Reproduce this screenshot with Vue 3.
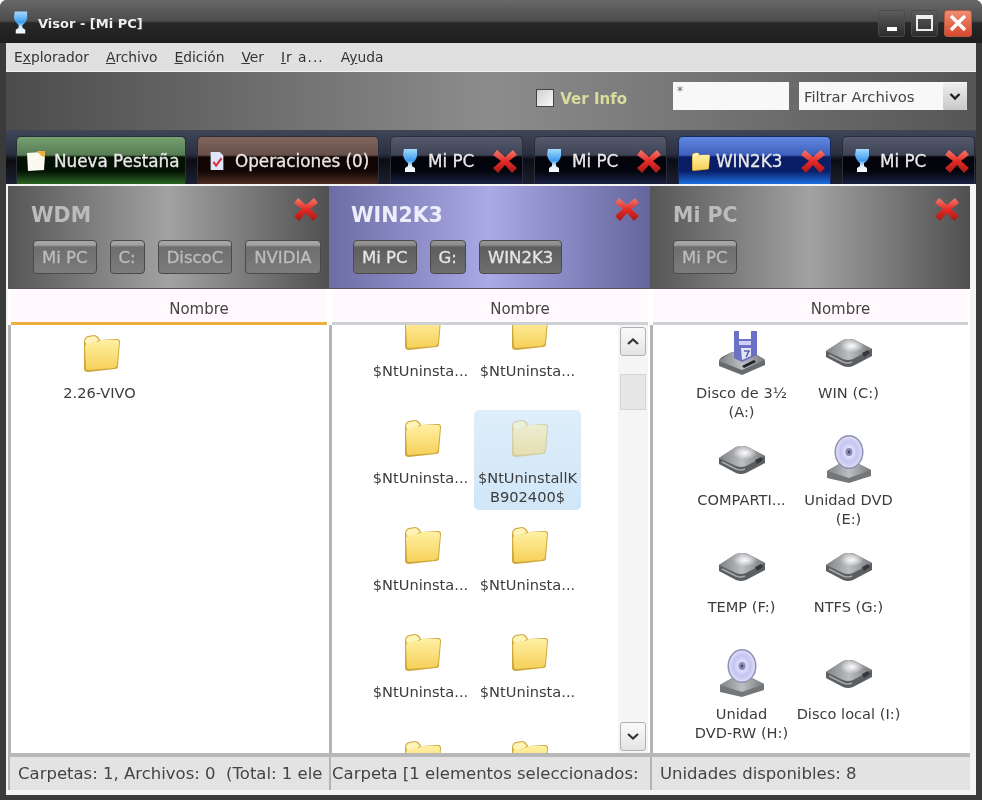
<template>
  <div class="window">
    <svg class="defs" width="0" height="0" aria-hidden="true">
      <defs>
        <linearGradient id="folderFace" x1="0" y1="0" x2="0" y2="1">
          <stop offset="0" stop-color="#fff0a2" />
          <stop offset="1" stop-color="#f6d05a" />
        </linearGradient>
        <linearGradient id="hddTop" x1="0" y1="0" x2="1" y2="0">
          <stop offset="0" stop-color="#7e8185" />
          <stop offset=".5" stop-color="#bcbec1" />
          <stop offset="1" stop-color="#76797d" />
        </linearGradient>
        <radialGradient id="hddGlow" cx=".5" cy=".5" r=".5">
          <stop offset="0" stop-color="#fcfcfc" />
          <stop offset="1" stop-color="#fcfcfc" stop-opacity="0" />
        </radialGradient>
        <radialGradient id="disc" cx=".5" cy=".5" r=".55">
          <stop offset="0" stop-color="#f4f4ff" />
          <stop offset=".6" stop-color="#c4c4f2" />
          <stop offset="1" stop-color="#e4e4fa" />
        </radialGradient>
        <linearGradient id="redX" x1="0" y1="0" x2="0" y2="1">
          <stop offset="0" stop-color="#f47a70" />
          <stop offset=".5" stop-color="#e42a24" />
          <stop offset="1" stop-color="#a81818" />
        </linearGradient>
        <linearGradient id="visor" x1="0" y1="0" x2="0" y2="1">
          <stop offset="0" stop-color="#a4dafc" />
          <stop offset=".5" stop-color="#3e9cf0" />
          <stop offset=".72" stop-color="#d8eefc" />
          <stop offset="1" stop-color="#fafcff" />
        </linearGradient>
      </defs>
      <symbol id="folder" viewBox="0 0 48 48">
        <path d="M8 14 Q8 9 12 8 L18 7 Q21 7 23 10 L24 12 L41 11 Q44 11 44 14 L42 38 Q42 41 39 41 L12 44 Q8 44 8 41Z" fill="#cfa83c" />
        <path d="M9 19 Q9 16 12 15 L20 14 Q22 14 25 12 L41 12 Q43 12 43 15 L41 37 Q41 39 38 40 L12 42 Q10 42 10 40Z" fill="url(#folderFace)" />
        <path d="M9 13 Q10 9 13 9 L18 8 Q20 8 22 11 L23 12 L20 14 L10 16Z" fill="#fff4b8" />
      </symbol>
      <symbol id="hdd" viewBox="0 0 48 48">
        <path d="M1 23 L18 12 Q24 10 30 12 L47 21 L47 28 L28 38 Q23 40 18 38 L1 29Z" fill="#5c5f62" />
        <path d="M1 23 L18 12 Q24 10 30 12 L47 21 L28 31 Q23 33 18 31Z" fill="url(#hddTop)" />
        <path d="M4 27 L18 34 Q23 36 27 34" fill="none" stroke="#a6a8ab" stroke-width="1.4" />
        <ellipse cx="27" cy="18" rx="12" ry="6.5" fill="url(#hddGlow)" />
        <path d="M37 25 L43 22 L45 25 L39 29Z" fill="#34373d" />
      </symbol>
      <symbol id="floppy" viewBox="0 0 48 48">
        <path d="M1 33 Q1 31 4 29 L14 24 L34 24 L46 31 Q47 32 47 34 L47 37 L24 47 L1 38Z" fill="#686b6e" />
        <path d="M1 33 L14 24 L34 24 L47 32 L24 42Z" fill="url(#hddTop)" />
        <path d="M16 3 L21 3 L21 11 L33 11 L33 3 L39 3 L39 27 L24 34 L16 30Z" fill="#6a70c4" />
        <path d="M21 13 L33 13 L33 17 L21 17Z" fill="#cdd0f0" />
        <path d="M23 20 L33 20 L33 28 L24 32Z" fill="#e4e6f8" />
        <path d="M26 23 L31 23 L28 29" fill="none" stroke="#5a60b4" stroke-width="1.6" />
        <path d="M24 38 L36 32 L38 34 L26 40Z" fill="#1e2026" />
      </symbol>
      <symbol id="dvd" viewBox="0 0 48 48">
        <path d="M2 36 L14 29 L34 29 L46 35 L46 41 L24 48 L2 43Z" fill="#74777a" />
        <path d="M2 36 L14 29 L34 29 L46 35 L24 43Z" fill="url(#hddTop)" />
        <ellipse cx="24" cy="17" rx="14.5" ry="17" fill="#8f90b4" />
        <ellipse cx="24" cy="17" rx="13" ry="15.5" fill="url(#disc)" />
        <ellipse cx="24" cy="17" rx="3.5" ry="4" fill="#8b8bb8" />
        <ellipse cx="24" cy="17" rx="1.3" ry="1.6" fill="#44446a" />
      </symbol>
      <symbol id="close" viewBox="0 0 24 24">
        <path d="M4 1 L12 8 L20 1 L24 6 L16 12 L24 19 L19 24 L12 16 L5 24 L0 19 L8 12 L0 6Z" fill="url(#redX)" />
      </symbol>
      <symbol id="visorIcon" viewBox="0 0 20 24">
        <path d="M4 0 L17 0 L17 7 Q16 12 12 14 L12 17 L15 19 L15 23 L5 23 L5 19 L8 17 L8 14 Q4 11 3 6Z" fill="url(#visor)" />
      </symbol>
      <symbol id="note" viewBox="0 0 20 20">
        <path d="M1 2 L15 1 L19 4 L18 19 L2 20Z" fill="#fbfaee" />
        <path d="M11 0 L19 0 L19 6 Q15 6 14 3 Q12 3 11 0Z" fill="#eeb040" />
      </symbol>
      <symbol id="ops" viewBox="0 0 20 22">
        <path d="M3 1 L13 1 L17 5 L17 21 L3 21Z" fill="#dce6f8" />
        <path d="M6 12 L9 16 L15 8" fill="none" stroke="#d8343c" stroke-width="2.4" />
      </symbol>
    </svg>

    <header class="titlebar">
      <svg class="title-icon"><use href="#visorIcon" /></svg>
      <span class="title-text">Visor - [Mi PC]</span>
      <div class="controls">
        <button class="ctl"><span class="min-mark"></span></button>
        <button class="ctl"><span class="max-mark"></span></button>
        <button class="ctl ctl-close">
          <svg width="20" height="20" viewBox="0 0 20 20"><path d="M3 3 L17 17 M17 3 L3 17" stroke="#fff" stroke-width="3.4" /></svg>
        </button>
      </div>
    </header>

    <nav class="menu">
      <span v-for="m in menu" :key="m[1]">{{ m[0] }}<u>{{ m[1] }}</u>{{ m[2] }}</span>
    </nav>

    <div class="toolbar">
      <label class="info"><span class="check"></span><span class="info-text">Ver Info</span></label>
      <div class="filter-input">*</div>
      <div class="filter-select">
        <span>Filtrar Archivos</span>
        <span class="select-btn">
          <svg width="12" height="9" viewBox="0 0 12 9"><path d="M1.5 2 L6 6.5 L10.5 2" fill="none" stroke="#222" stroke-width="2.4" /></svg>
        </span>
      </div>
    </div>

    <div class="tabs">
      <div v-for="t in tabs" :key="t.id" class="tab" :class="t.kind" :style="{ width: t.width + 'px' }">
        <svg class="tab-icon" :class="t.icon + '-small'"><use :href="'#' + t.icon" /></svg>
        <span class="tab-label">{{ t.label }}</span>
        <svg v-if="t.closable" class="tab-x"><use href="#close" /></svg>
      </div>
    </div>

    <main class="panes">
      <section v-for="p in panes" :key="p.title" class="pane" :class="{ active: p.active }">
        <div class="pane-head">
          <div class="head-row">
            <h2>{{ p.title }}</h2>
            <svg class="pane-x"><use href="#close" /></svg>
          </div>
          <div class="crumbs">
            <span v-for="c in p.crumbs" :key="c" class="crumb">{{ c }}</span>
          </div>
        </div>
        <div class="col-head" :class="{ sorted: p.sorted }">Nombre</div>
        <div class="content">
          <div class="items" :class="{ scrolled: p.scroll }">
            <div v-for="(it, i) in p.items" :key="i" class="item" :class="{ selected: it.selected }">
              <svg class="item-icon"><use :href="'#' + it.icon" /></svg>
              <div v-if="it.label" class="item-label">{{ it.label }}</div>
            </div>
          </div>
          <div v-if="p.scroll" class="scrollbar">
            <span class="sb-btn">
              <svg width="14" height="9" viewBox="0 0 14 9"><path d="M2 7 L7 2.5 L12 7" fill="none" stroke="#333" stroke-width="2.2" /></svg>
            </span>
            <span class="sb-thumb"></span>
            <span class="sb-btn sb-down">
              <svg width="14" height="9" viewBox="0 0 14 9"><path d="M2 2 L7 6.5 L12 2" fill="none" stroke="#333" stroke-width="2.2" /></svg>
            </span>
          </div>
        </div>
        <footer class="status">{{ p.status }}</footer>
      </section>
    </main>
  </div>
</template>

<script setup>
const menu = [
  ['E', 'x', 'plorador'],
  ['', 'A', 'rchivo'],
  ['', 'E', 'dición'],
  ['', 'V', 'er'],
  ['', 'I', 'r a...'],
  ['A', 'y', 'uda']
]

const tabs = [
  { id: 1, label: 'Nueva Pestaña', icon: 'note', kind: 'green', width: 170 },
  { id: 2, label: 'Operaciones (0)', icon: 'ops', kind: 'brown', width: 182 },
  { id: 3, label: 'Mi PC', icon: 'visorIcon', kind: 'plain', width: 133, closable: true },
  { id: 4, label: 'Mi PC', icon: 'visorIcon', kind: 'plain', width: 133, closable: true },
  { id: 5, label: 'WIN2K3', icon: 'folder', kind: 'current', width: 153, closable: true },
  { id: 6, label: 'Mi PC', icon: 'visorIcon', kind: 'plain', width: 133, closable: true }
]

const nt = { icon: 'folder', label: '$NtUninsta...' }
// last row is scrolled out, only the top of the folders shows
const cut = { icon: 'folder', label: '' }

const panes = [
  {
    title: 'WDM',
    crumbs: ['Mi PC', 'C:', 'DiscoC', 'NVIDIA'],
    sorted: true,
    items: [{ icon: 'folder', label: '2.26-VIVO' }],
    status: 'Carpetas: 1, Archivos: 0  (Total: 1 ele'
  },
  {
    title: 'WIN2K3',
    active: true,
    scroll: true,
    crumbs: ['Mi PC', 'G:', 'WIN2K3'],
    items: [
      nt, nt, nt,
      { icon: 'folder', label: '$NtUninstallKB902400$', selected: true },
      nt, nt, nt, nt, cut, cut
    ],
    status: 'Carpeta [1 elementos seleccionados:'
  },
  {
    title: 'Mi PC',
    crumbs: ['Mi PC'],
    items: [
      { icon: 'floppy', label: 'Disco de 3½ (A:)' },
      { icon: 'hdd', label: 'WIN (C:)' },
      { icon: 'hdd', label: 'COMPARTI...' },
      { icon: 'dvd', label: 'Unidad DVD (E:)' },
      { icon: 'hdd', label: 'TEMP (F:)' },
      { icon: 'hdd', label: 'NTFS (G:)' },
      { icon: 'dvd', label: 'Unidad DVD‑RW (H:)' },
      { icon: 'hdd', label: 'Disco local (I:)' }
    ],
    status: 'Unidades disponibles: 8'
  }
]
</script>

<style scoped>
.window {
  position: relative;
  width: 982px;
  height: 800px;
  display: flex;
  flex-direction: column;
  overflow: hidden;
  background: #3a3a3a;
  border-radius: 7px 7px 0 0;
  font-family: "DejaVu Sans", sans-serif;
  color: #444;
  filter: blur(0.45px);
}
.defs {
  position: absolute;
}

.titlebar {
  height: 43px;
  flex: none;
  display: flex;
  align-items: center;
  padding: 3px 10px 0 11px;
  box-sizing: border-box;
  background: linear-gradient(#686868 0, #4c4c4c 21px, #282828 23px, #1e1e1e 43px);
}
.title-icon {
  width: 19px;
  height: 24px;
  margin-right: 8px;
}
.title-text {
  color: #eee;
  font-size: 13px;
  font-weight: 700;
}
.controls {
  margin-left: auto;
  display: flex;
  gap: 6px;
}
.ctl {
  width: 27px;
  height: 27px;
  padding: 0;
  display: flex;
  align-items: center;
  justify-content: center;
  border: 1px solid #4a4a4a;
  border-radius: 3px;
  background: linear-gradient(#5c5c5c, #2c2c2c);
}
.ctl-close {
  width: 28px;
  background: linear-gradient(#ee8e72, #d8482c);
  border-color: #b05a40;
}
.min-mark {
  width: 10px;
  height: 4px;
  background: #fff;
  margin-top: 11px;
}
.max-mark {
  width: 17px;
  height: 16px;
  border: 2px solid #eee;
  border-top-width: 4px;
  box-sizing: border-box;
}

.menu {
  height: 29px;
  flex: none;
  margin: 0 6px;
  padding-left: 8px;
  display: flex;
  align-items: center;
  gap: 17px;
  background: #e0e0e0;
  border-bottom: 1px solid #f2f2f2;
  color: #333;
  font-size: 13.8px;
  box-sizing: border-box;
}
.menu span:nth-child(5) {
  letter-spacing: 1px;
}

.toolbar {
  height: 58px;
  flex: none;
  margin: 0 6px;
  display: flex;
  align-items: center;
  padding: 0 9px 10px 0;
  box-sizing: border-box;
  background: linear-gradient(90deg, #4c4c4c, #8c8c8c 50%, #565656);
}
.info {
  margin-left: auto;
  margin-top: 3px;
  display: flex;
  align-items: center;
  gap: 6px;
  color: #d8dc9c;
  font-size: 15px;
  font-weight: 700;
}
.info-text {
  padding-top: 3px;
}
.check {
  width: 18px;
  height: 18px;
  box-sizing: border-box;
  border: 1px solid #444;
  background: linear-gradient(135deg, #d0d0d0, #fafafa);
}
.filter-input {
  width: 116px;
  height: 28px;
  margin-left: 46px;
  padding: 2px 4px;
  box-sizing: border-box;
  background: #f8f8f8;
  color: #666;
  font-size: 12px;
}
.filter-select {
  width: 168px;
  height: 28px;
  margin-left: 10px;
  padding-left: 5px;
  display: flex;
  align-items: center;
  justify-content: space-between;
  box-sizing: border-box;
  background: #f8f8f8;
  color: #444;
  font-size: 14.8px;
}
.select-btn {
  width: 24px;
  height: 27px;
  display: flex;
  align-items: center;
  justify-content: center;
  background: linear-gradient(#eee, #c8c8c8);
  border-radius: 2px;
}

.tabs {
  height: 54px;
  flex: none;
  margin: 0 6px;
  padding: 6px 0 0 10px;
  display: flex;
  gap: 11px;
  box-sizing: border-box;
  background: linear-gradient(#3e4658, #2a3040 24px, #0c0c12 30px, #1c2030);
}
.tab {
  --a: #545a6c;
  --b: #3e4456;
  --c: #04040c;
  --d: #1a2244;
  height: 48px;
  flex: none;
  display: flex;
  align-items: center;
  padding-left: 9px;
  box-sizing: border-box;
  border: 1px solid #2a2e3a;
  border-bottom: none;
  border-radius: 5px 5px 0 0;
  background: linear-gradient(var(--a), var(--b) 18px, var(--c) 20px, var(--c) 34px, var(--d));
  color: #e8e8e8;
  font-size: 16.8px;
  -webkit-text-stroke: 0.3px #e8e8e8;
  white-space: nowrap;
}
.green {
  --a: #76a070;
  --b: #587c54;
  --c: #041204;
  --d: #2a6424;
}
.brown {
  --a: #80655c;
  --b: #66504a;
  --c: #120604;
  --d: #4e2c22;
}
.current {
  --a: #6088e0;
  --b: #3f60bc;
  --c: #0a1e68;
  --d: #1c70e0;
  border-color: #17285c;
}
.tab-icon {
  width: 20px;
  height: 24px;
  margin-right: 8px;
  flex: none;
}
.note-small,
.ops-small {
  height: 20px;
}
.folder-small {
  width: 24px;
  height: 24px;
  margin-right: 4px;
}
.tab-x {
  width: 24px;
  height: 24px;
  margin-left: auto;
  margin-right: 5px;
}

.panes {
  flex: 1;
  min-height: 0;
  margin: 0 6px 5px;
  padding: 2px 6px 5px 2px;
  display: grid;
  grid-template-columns: 321px 321px 320px;
  grid-template-rows: minmax(0, 1fr);
  background: #f4f4f4;
}
.pane {
  min-width: 0;
  min-height: 0;
  display: flex;
  flex-direction: column;
  background: #fff;
}
.pane-head {
  height: 103px;
  flex: none;
  padding: 11px 11px 0 23px;
  box-sizing: border-box;
  background: linear-gradient(90deg, #565656, #a2a2a2 50%, #505050);
  border-bottom: 1px solid #555;
}
.active .pane-head {
  background: linear-gradient(90deg, #6c6da4, #a9aae6 50%, #64659c);
  padding-left: 22px;
}
.head-row {
  height: 43px;
  display: flex;
  justify-content: space-between;
}
h2 {
  margin: 5px 0 0;
  font-size: 20.5px;
  line-height: 26px;
  font-weight: 700;
  color: #bcbcbc;
}
.active h2 {
  color: #eeeefa;
}
.pane-x {
  width: 24px;
  height: 24px;
}
.crumbs {
  display: flex;
  gap: 13px;
  margin-left: 2px;
}
.pane:last-child .crumbs {
  margin-left: 0;
}
.crumb {
  height: 34px;
  padding: 0 8px;
  display: flex;
  align-items: center;
  box-sizing: border-box;
  border: 1px solid #4a4a4a;
  border-radius: 4px;
  background: linear-gradient(#a8a8a8 0, #a0a0a0 4px, #6e6e6e 6px, #7c7c7c);
  color: #bdbdbd;
  font-size: 16.5px;
  -webkit-text-stroke: 0.3px #bdbdbd;
  white-space: nowrap;
}
.active .crumb {
  background: linear-gradient(#969696 0, #8c8c8c 4px, #5e5e5e 6px, #6e6e6e);
  color: #e6e6e6;
  -webkit-text-stroke-color: #e6e6e6;
}
.col-head {
  height: 36px;
  flex: none;
  margin: 0 2px 0 3px;
  padding: 6px 0 0 60px;
  display: flex;
  align-items: center;
  justify-content: center;
  box-sizing: border-box;
  background: #fff9fd;
  border-bottom: 3px solid #cfd0d4;
  color: #444;
  font-size: 15px;
}
.col-head.sorted {
  border-bottom-color: #eab23c;
}
.content {
  flex: 1;
  min-height: 0;
  position: relative;
  overflow: hidden;
  border-left: 3px solid #b4b4b4;
  background: #fff;
}
.items {
  padding-left: 35px;
  display: grid;
  grid-template-columns: 107px 107px;
  grid-auto-rows: 107px;
}
.items.scrolled {
  margin-top: -22px;
}
.item {
  height: 100px;
  padding-top: 3px;
  box-sizing: border-box;
  text-align: center;
  border-radius: 5px;
  color: #3c3c3c;
  font-size: 14.6px;
  line-height: 19px;
}
.item-icon {
  width: 48px;
  height: 48px;
  display: block;
  margin: 0 auto 7px;
}
.item-label {
  overflow-wrap: anywhere;
}
.selected {
  background: linear-gradient(#deeefa, #d0e6f8);
}
.selected .item-icon {
  opacity: 0.45;
}
.scrollbar {
  position: absolute;
  top: 0;
  right: 2px;
  bottom: 0;
  width: 30px;
  padding: 2px 2px;
  display: flex;
  flex-direction: column;
  box-sizing: border-box;
  background: #f5f5f5;
}
.sb-btn {
  height: 29px;
  flex: none;
  display: flex;
  align-items: center;
  justify-content: center;
  box-sizing: border-box;
  border: 1px solid #b0b0b0;
  border-radius: 3px;
  background: linear-gradient(#fafafa, #e4e4e4);
}
.sb-thumb {
  height: 36px;
  margin-top: 18px;
  flex: none;
  background: #e6e6e6;
  border: 1px solid #d6d6d6;
  box-sizing: border-box;
}
.sb-down {
  margin-top: auto;
}
.status {
  height: 37px;
  flex: none;
  padding: 0 0 0 8px;
  display: flex;
  align-items: center;
  box-sizing: border-box;
  overflow: hidden;
  white-space: pre;
  background: #e3e3e3;
  border-top: 4px solid #b8b8b8;
  border-left: 2px solid #b4b4b4;
  color: #444;
  font-size: 16.5px;
}
.active .status {
  padding-left: 1px;
}
</style>

<style>
html,
body {
  margin: 0;
  background: #fff;
}
</style>
